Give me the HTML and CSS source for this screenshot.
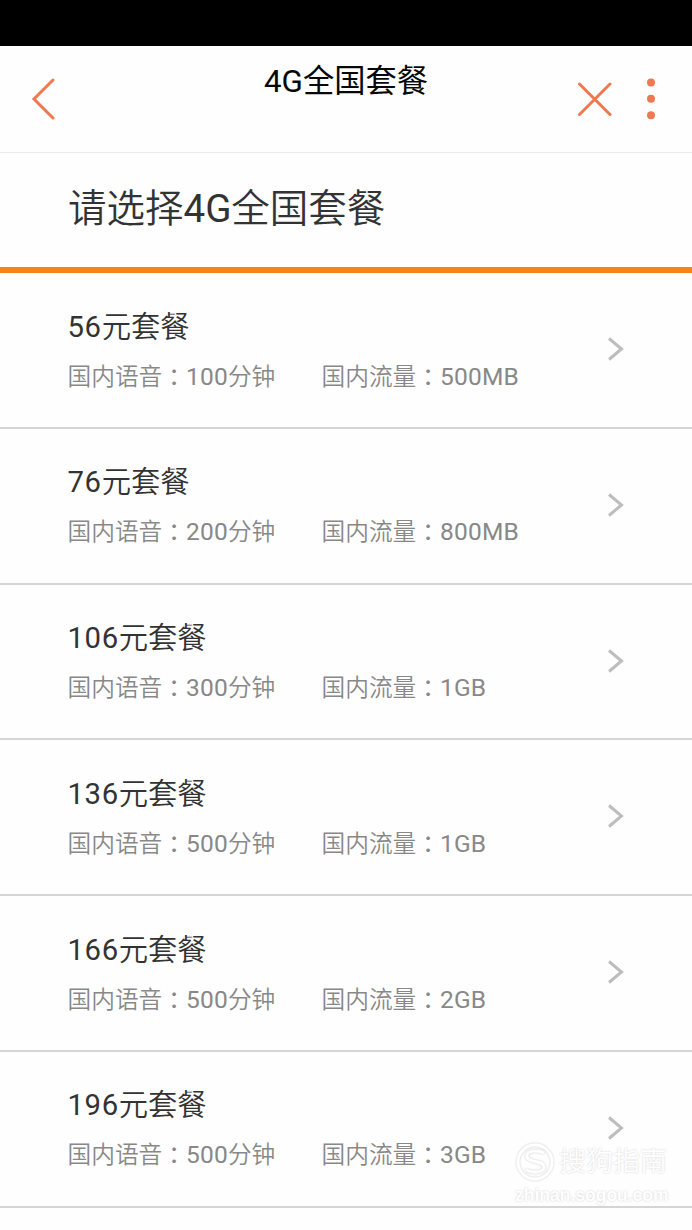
FILE: index.html
```html
<!DOCTYPE html>
<html lang="zh-CN">
<head>
<meta charset="utf-8">
<title>4G全国套餐</title>
<link rel="stylesheet" href="styles.css">
</head>
<body>
<div class="status"></div>
<header class="nav">
  <svg class="back" width="28" height="44" viewBox="0 0 28 44"><path d="M23 3 4 22l19 19"/></svg>
  <h1>4G全国套餐</h1>
  <svg class="close" width="36" height="36" viewBox="0 0 36 36"><path d="M3.500 3 34 33.500M34 3 3.500 33.500"/></svg>
  <svg class="more" width="12" height="44" viewBox="0 0 12 44"><circle cx="6" cy="5.500" r="4"/><circle cx="6" cy="21.800" r="4"/><circle cx="6" cy="38.200" r="4"/></svg>
</header>
<h2 class="heading">请选择4G全国套餐</h2>
<main class="plans">
  <section class="plan"><div class="info"><h3><b>56</b>元套餐</h3><p><span class="voice">国内语音<i lang="zh-TW">：</i><b>100</b>分钟</span><span>国内流量<i lang="zh-TW">：</i><b>500MB</b></span></p></div><svg class="arrow" width="18" height="26" viewBox="0 0 18 26"><path d="M2 2.500 14.500 13 2 23.500"/></svg></section>
  <section class="plan"><div class="info"><h3><b>76</b>元套餐</h3><p><span class="voice">国内语音<i lang="zh-TW">：</i><b>200</b>分钟</span><span>国内流量<i lang="zh-TW">：</i><b>800MB</b></span></p></div><svg class="arrow" width="18" height="26" viewBox="0 0 18 26"><path d="M2 2.500 14.500 13 2 23.500"/></svg></section>
  <section class="plan"><div class="info"><h3><b>106</b>元套餐</h3><p><span class="voice">国内语音<i lang="zh-TW">：</i><b>300</b>分钟</span><span>国内流量<i lang="zh-TW">：</i><b>1GB</b></span></p></div><svg class="arrow" width="18" height="26" viewBox="0 0 18 26"><path d="M2 2.500 14.500 13 2 23.500"/></svg></section>
  <section class="plan"><div class="info"><h3><b>136</b>元套餐</h3><p><span class="voice">国内语音<i lang="zh-TW">：</i><b>500</b>分钟</span><span>国内流量<i lang="zh-TW">：</i><b>1GB</b></span></p></div><svg class="arrow" width="18" height="26" viewBox="0 0 18 26"><path d="M2 2.500 14.500 13 2 23.500"/></svg></section>
  <section class="plan"><div class="info"><h3><b>166</b>元套餐</h3><p><span class="voice">国内语音<i lang="zh-TW">：</i><b>500</b>分钟</span><span>国内流量<i lang="zh-TW">：</i><b>2GB</b></span></p></div><svg class="arrow" width="18" height="26" viewBox="0 0 18 26"><path d="M2 2.500 14.500 13 2 23.500"/></svg></section>
  <section class="plan"><div class="info"><h3><b>196</b>元套餐</h3><p><span class="voice">国内语音<i lang="zh-TW">：</i><b>500</b>分钟</span><span>国内流量<i lang="zh-TW">：</i><b>3GB</b></span></p></div><svg class="arrow" width="18" height="26" viewBox="0 0 18 26"><path d="M2 2.500 14.500 13 2 23.500"/></svg></section>
</main>
<div class="watermark">
  <div class="brand">
    <svg width="40" height="40" viewBox="0 0 40 40"><circle cx="20" cy="20" r="17"/><path d="M29 11c-5-3-17-3-17 3 0 7 17 4 17 11 0 6-12 6-18 3"/></svg>
    <span>搜狗指南</span>
  </div>
  <div class="site">zhinan.sogou.com</div>
</div>
</body>
</html>
```

FILE: styles.css
```css
* { box-sizing: border-box; }
body {
  margin: 0;
  width: 692px;
  height: 1230px;
  overflow: hidden;
  position: relative;
  background: #fefefe;
  font-family: Roboto, "Noto Sans CJK SC DemiLight", "Noto Sans CJK SC", sans-serif;
}
h1, h2, h3, p { margin: 0; font-weight: 400; white-space: nowrap; }
svg { display: block; flex: none; fill: none; }
.status { height: 46px; background: #000; }
.nav {
  height: 107px;
  padding: 0 35px 0 30px;
  display: grid;
  grid-template-columns: 28px 1fr 36px 12px;
  column-gap: 33px;
  align-items: center;
  border-bottom: 1px solid #ebebeb;
}
.nav h1 {
  align-self: start;
  padding-top: 16px;
  padding-left: 173px;
  font-family: Roboto, "Noto Sans CJK SC", sans-serif;
  font-size: 31.300px;
  line-height: 40px;
  color: #080808;
}
.back, .close { stroke: #ee7950; stroke-width: 3; stroke-linecap: round; }
.close { justify-self: end; }
.more { fill: #ee7950; }
.heading {
  height: 120.400px;
  padding: 31px 0 0 68px;
  border-bottom: 6px solid #f5831b;
  font-size: 38.500px;
  line-height: 50px;
  color: #333;
}
.plan {
  height: 155.700px;
  padding: 32.400px 67px 0 67.500px;
  display: flex;
  justify-content: space-between;
  align-items: flex-start;
  border-bottom: 2px solid #d5d5d5;
}
.plan b { font-weight: 400; }
.plan h3 { font-size: 29.300px; line-height: 42px; color: #333; }
.plan h3 b { letter-spacing: .6px; }
.plan p { display: flex; margin-top: 10px; font-size: 23.700px; line-height: 34px; color: #888; }
.plan p b { font-size: 24.500px; letter-spacing: .2px; line-height: 1; }
.plan i { font-style: normal; font-family: "Noto Sans CJK TC", sans-serif; position: relative; top: 1px; }
.voice { width: 254px; }
.arrow { margin-top: 30.600px; stroke: #bdbdbd; stroke-width: 3; }
.watermark {
  position: absolute;
  left: 515px;
  top: 1142px;
  width: 160px;
  color: #fff;
  text-shadow: 0 0 2px #ccc;
}
.brand { display: flex; align-items: center; gap: 4px; font-size: 27px; line-height: 40px; font-weight: 500; white-space: nowrap; }
.brand svg { stroke: #fff; stroke-width: 3; filter: drop-shadow(0 0 1px #ccc); }
.site { margin-top: 1px; font: 700 17.500px/24px "Liberation Sans", sans-serif; white-space: nowrap; }
```
